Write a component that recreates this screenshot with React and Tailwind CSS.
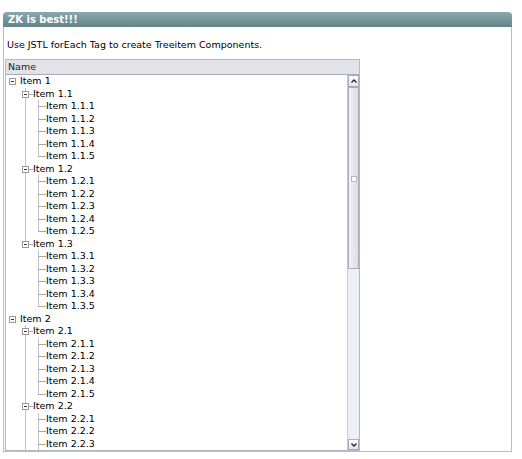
import React from 'react';

const makeTree = () =>
  [1, 2].map((a) => ({
    label: `Item ${a}`,
    children: [1, 2, 3].map((b) => ({
      label: `Item ${a}.${b}`,
      children: [1, 2, 3, 4, 5].map((c) => ({ label: `Item ${a}.${b}.${c}` })),
    })),
  }));

// flatten nodes, remembering which ancestors were the last child
const flatten = (nodes, depth = 0, trail = []) =>
  nodes.flatMap((node, i) => {
    const isLast = i === nodes.length - 1;
    const row = { label: node.label, depth, isLast, trail, hasChildren: !!node.children };
    return [row, ...(node.children ? flatten(node.children, depth + 1, [...trail, isLast]) : [])];
  });

// only the rows that fit in the scroll window are rendered
const VISIBLE_ROWS = 30;
const rows = flatten(makeTree()).slice(0, VISIBLE_ROWS);

const ToggleBox = () => (
  <span className="absolute left-[3px] top-[3px] z-10 flex h-[7px] w-[7px] items-center justify-center border border-[#9a9a9a] bg-white">
    <span className="h-px w-[3px] bg-[#333]" />
  </span>
);

const Row = ({ row }) => {
  const cells = [];
  // root column never gets lines
  cells.push(
    <span key="root" className="relative h-full w-[13px] shrink-0">
      {row.depth === 0 && row.hasChildren && <ToggleBox />}
    </span>
  );
  // columns of ancestors below the root
  for (let d = 1; d < row.depth; d++) {
    const ancestorLast = row.trail[d];
    cells.push(
      <span key={d} className="relative h-full w-[13px] shrink-0">
        {!ancestorLast && <span className="absolute left-[6px] top-0 h-full w-px bg-[#c4c4c4]" />}
      </span>
    );
  }
  if (row.depth > 0) {
    cells.push(
      <span key="own" className="relative h-full w-[13px] shrink-0">
        <span className="absolute left-[6px] top-0 h-1/2 w-px bg-[#c4c4c4]" />
        {!row.isLast && <span className="absolute left-[6px] top-1/2 h-1/2 w-px bg-[#c4c4c4]" />}
        <span className="absolute left-[6px] top-[6px] h-px w-[8px] bg-[#a8a8a8]" />
        {row.hasChildren && <ToggleBox />}
      </span>
    );
  }
  return (
    <div className="flex h-[12.5px] items-stretch">
      {cells}
      <span className="ml-px whitespace-nowrap leading-[12px]">{row.label}</span>
    </div>
  );
};

const Scrollbar = () => (
  <div className="flex w-[12px] shrink-0 flex-col border-l border-[#c9cad6] bg-[#ecedf3]">
    <div className="flex h-[12px] items-center justify-center border border-[#a9abbb] bg-gradient-to-b from-white to-[#e3e4ec]">
      <svg width="6" height="4" viewBox="0 0 6 4">
        <path d="M0.5 3.5 L3 1 L5.5 3.5" fill="none" stroke="#222" strokeWidth="1.3" />
      </svg>
    </div>
    <div className="relative h-[182px] border border-[#a9abbb] bg-gradient-to-r from-[#f4f4f8] via-[#e6e7ef] to-[#dcdde6]">
      <span className="absolute left-[2px] top-[88px] h-[6px] w-[6px] border border-[#b4b6c4] bg-white" />
    </div>
    <div className="flex-1 bg-[#eeeff4]" />
    <div className="flex h-[11px] items-center justify-center border border-[#a9abbb] bg-gradient-to-b from-white to-[#e3e4ec]">
      <svg width="6" height="4" viewBox="0 0 6 4">
        <path d="M0.5 0.5 L3 3 L5.5 0.5" fill="none" stroke="#222" strokeWidth="1.3" />
      </svg>
    </div>
  </div>
);

export default function App() {
  return (
    <div className="h-[459px] w-[522px] bg-white pl-[3px] pt-[12px] font-['DejaVu_Sans',Verdana,sans-serif] text-[9.5px] text-black">
      <div className="w-[509px]">
        <div className="flex h-[15px] items-center rounded-t-[4px] bg-gradient-to-b from-[#8aa8ad] to-[#628388] pl-[5px] text-[10px] font-bold text-white">
          ZK is best!!!
        </div>
        <div className="h-[425px] border-x border-b border-[#b9bccb] pl-px pt-[11px]">
          <p className="pl-[2px] leading-[13px]">Use JSTL forEach Tag to create Treeitem Components.</p>
          <div className="mt-[8px] w-[355px] border border-[#b3b8c6]">
            <div className="h-[15px] border-b border-[#a9adbb] bg-[#e2e2e8] pl-[2px] leading-[14px] text-[#222]">Name</div>
            <div className="flex h-[375px]">
              <div className="flex-1 overflow-hidden">
                {rows.map((row) => (
                  <Row key={row.label} row={row} />
                ))}
              </div>
              <Scrollbar />
            </div>
          </div>
        </div>
      </div>
    </div>
  );
}
